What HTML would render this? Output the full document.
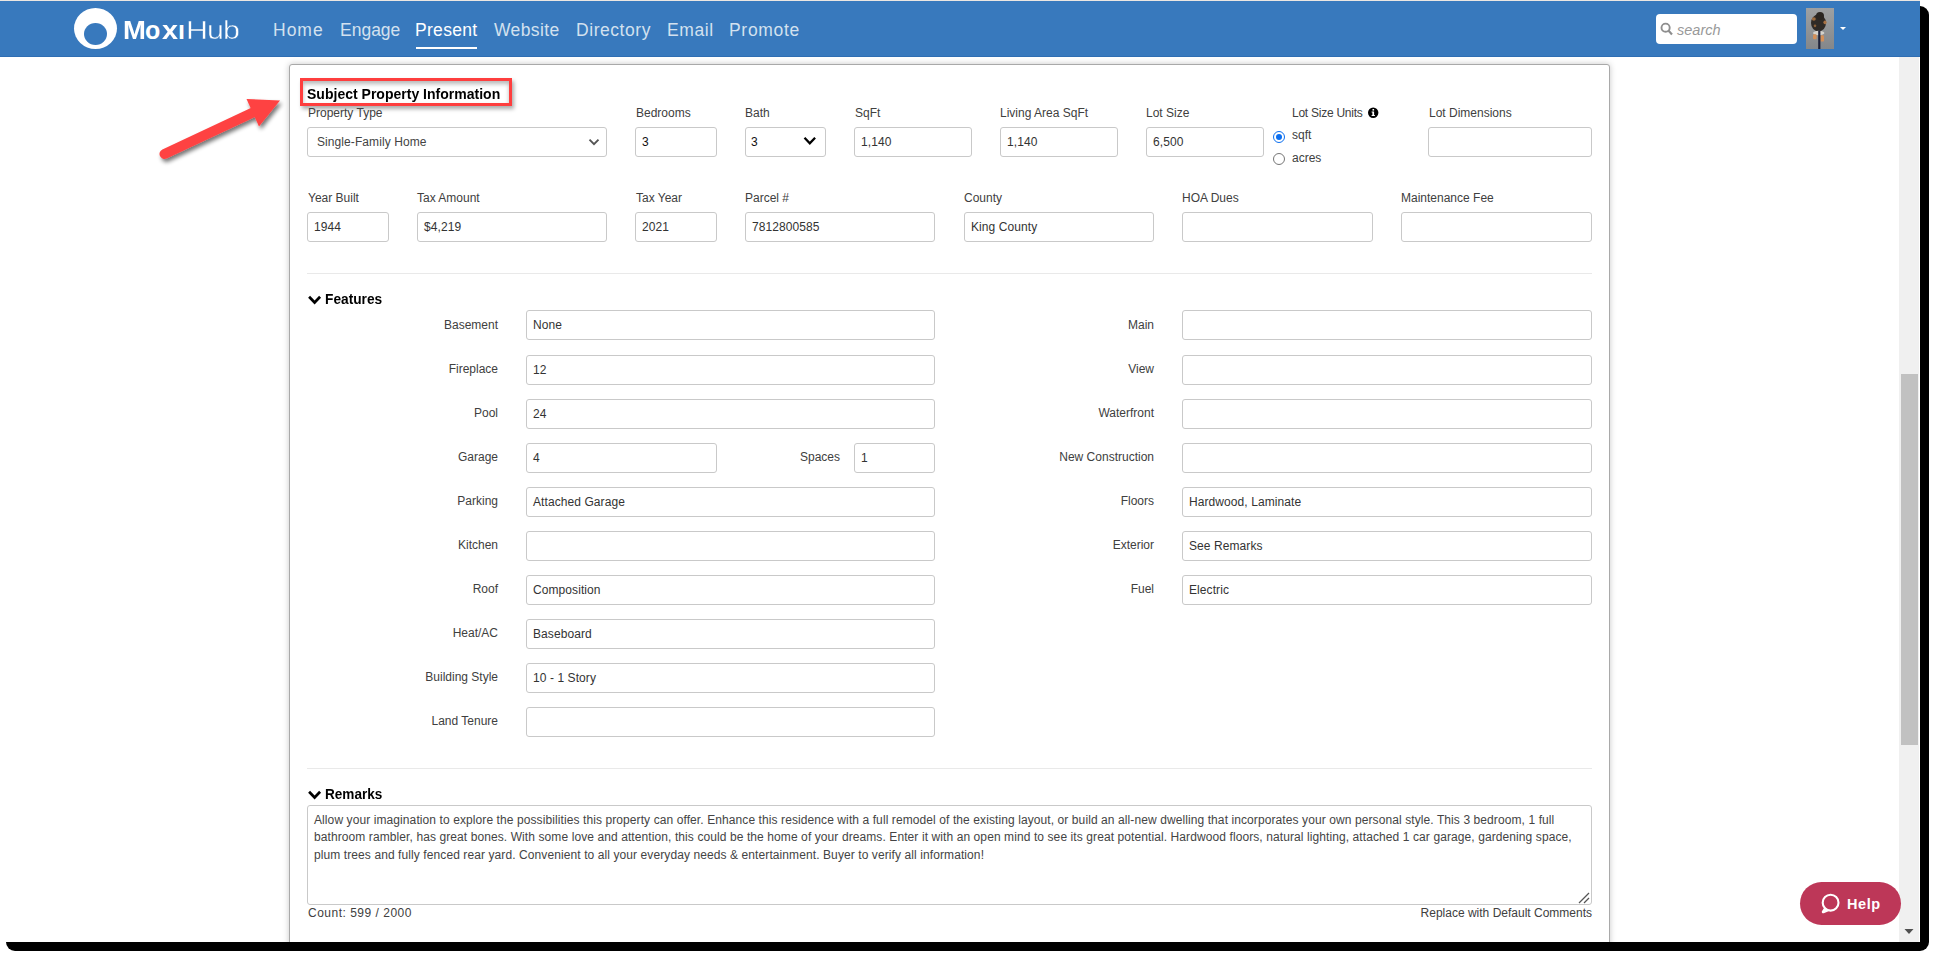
<!DOCTYPE html>
<html><head><meta charset="utf-8">
<style>
html,body{margin:0;padding:0;}
body{width:1935px;height:957px;overflow:hidden;position:relative;background:#fff;font-family:"Liberation Sans",sans-serif;}
.abs{position:absolute;}
#shadow{position:absolute;left:6px;top:6px;width:1923px;height:945px;background:#000;border-radius:9px;}
#win{position:absolute;left:0;top:0;width:1920px;height:942px;background:#fff;overflow:hidden;}
#topline{position:absolute;left:0;top:0;width:1920px;height:1px;background:#ebe6e2;}
#nav{position:absolute;left:0;top:1px;width:1920px;height:56px;background:#3879bd;border-bottom:0;}
#nav .bb{position:absolute;left:0;bottom:0;width:1920px;height:1px;background:#2f6eb3;}
.nl{position:absolute;top:19px;font-size:17.5px;line-height:22px;color:#d3e1ef;white-space:nowrap;}
.nl.act{color:#fff;}
#logo-o{position:absolute;left:74px;top:8px;width:43px;height:41px;border-radius:50%;background:#fff;}
#logo-i{position:absolute;left:84px;top:23px;width:23px;height:22px;border-radius:50%;background:#3879bd;}
.lg{position:absolute;top:14px;font-size:25px;line-height:32px;color:#fff;white-space:nowrap;}.lg.b{font-weight:bold;}.lg.t{-webkit-text-stroke:0.45px #3879bd;transform:scaleX(1.22);transform-origin:0 0;}
#search{position:absolute;left:1656px;top:14px;width:141px;height:30px;box-sizing:border-box;background:#fff;border-radius:4px;}
#avatar{position:absolute;left:1806px;top:8px;width:28px;height:41px;}
#scroll{position:absolute;left:1899px;top:57px;width:20px;height:885px;background:#f0f0f0;}
#thumb{position:absolute;left:1901px;top:374px;width:17px;height:371px;background:#c1c1c1;}
#card{position:absolute;left:289px;top:64px;width:1319px;height:1000px;border:1px solid #a9a9a9;border-radius:3px;background:#fff;box-shadow:0 0 6px rgba(0,0,0,0.22);}
.lbl{position:absolute;font-size:12px;line-height:14px;color:#404040;white-space:nowrap;}
.rl{text-align:right;}
.inp{position:absolute;box-sizing:border-box;height:30px;border:1px solid #c9c9c9;border-radius:3px;background:#fff;font-size:12px;line-height:28px;color:#333;padding-left:6px;white-space:nowrap;letter-spacing:0.08px;}
.hr{position:absolute;left:307px;width:1285px;height:1px;background:#e9e9e9;}
.sec{position:absolute;font-size:15px;font-weight:bold;line-height:17px;color:#000;white-space:nowrap;transform:scaleX(0.915);transform-origin:0 0;}
</style></head><body>
<div id="shadow"></div>
<div id="win">
  <div id="topline"></div>
  <div id="nav"><div class="bb"></div></div>
  <div id="logo-o"></div><div id="logo-i"></div>
  <div class="lg b" style="left:123px;transform:scaleX(1.1);transform-origin:0 0">M</div><div class="lg b" style="left:145px">o</div><div class="lg b" style="left:162px;transform:scaleX(1.15);transform-origin:0 0">x</div><div class="lg b" style="left:178px">&#305;</div><div class="lg t" style="left:185.5px">H</div><div class="lg t" style="left:207px">u</div><div class="lg t" style="left:223px">b</div>
  <div class="nl" style="left:273px;letter-spacing:1px">Home</div>
  <div class="nl" style="left:340px">Engage</div>
  <div class="nl act" style="left:415px;letter-spacing:0.3px">Present</div>
  <div class="abs" style="left:416px;top:47px;width:61px;height:2px;background:#fff"></div>
  <div class="nl" style="left:494px;letter-spacing:0.4px">Website</div>
  <div class="nl" style="left:576px;letter-spacing:0.55px">Directory</div>
  <div class="nl" style="left:667px;letter-spacing:0.6px">Email</div>
  <div class="nl" style="left:729px;letter-spacing:0.7px">Promote</div>
  <div id="search"></div>
  <svg id="avatar" width="28" height="41" viewBox="0 0 28 41"><defs><linearGradient id="avg" x1="0" y1="0" x2="0" y2="1"><stop offset="0" stop-color="#9ea0a2"/><stop offset="1" stop-color="#84878a"/></linearGradient></defs><rect width="28" height="41" fill="url(#avg)"/>
<ellipse cx="12.5" cy="15" rx="7.5" ry="8.5" fill="#2f2a26"/><ellipse cx="14" cy="8" rx="4" ry="4" fill="#2a2521"/><ellipse cx="7.8" cy="11" rx="2" ry="1.8" fill="#9a6a3e"/><ellipse cx="19" cy="14.3" rx="1.6" ry="1.9" fill="#a87244"/><ellipse cx="9" cy="17.8" rx="1.3" ry="1.4" fill="#8a5f38"/><ellipse cx="12.7" cy="25" rx="5.7" ry="2.2" fill="#d5d2cc"/><rect x="7" y="26.3" width="3.6" height="5" rx="1.2" fill="#d59058"/><rect x="14.5" y="27.3" width="3.5" height="6.3" rx="1.2" fill="#d59058"/><rect x="12.2" y="22.5" width="2.2" height="18.5" fill="#1f2238"/></svg>
  <div id="scroll"></div>
  <div id="thumb"></div>
  <div id="card"></div>
  <div class="abs" style="left:300px;top:78px;width:206px;height:22px;border:3px solid #fe3e3e;box-shadow:2px 3px 4px rgba(0,0,0,0.33), inset 0px 3px 4px rgba(0,0,0,0.28);"></div>
  <div class="abs" style="left:307px;top:85px;font-size:15px;font-weight:bold;line-height:17px;color:#000;white-space:nowrap;transform:scaleX(0.935);transform-origin:0 0">Subject Property Information</div>
  <div class="lbl" style="left:308px;top:106px;">Property Type</div>
<div class="inp" style="left:307px;top:127px;width:300px;padding-left:9px;color:#444">Single-Family Home</div>
<div class="lbl" style="left:636px;top:106px;">Bedrooms</div>
<div class="inp" style="left:635px;top:127px;width:82px;color:#111">3</div>
<div class="lbl" style="left:745px;top:106px;">Bath</div>
<div class="inp" style="left:745px;top:127px;width:81px;color:#111;padding-left:5px">3</div>
<div class="lbl" style="left:855px;top:106px;">SqFt</div>
<div class="inp" style="left:854px;top:127px;width:118px;">1,140</div>
<div class="lbl" style="left:1000px;top:106px;">Living Area SqFt</div>
<div class="inp" style="left:1000px;top:127px;width:118px;">1,140</div>
<div class="lbl" style="left:1146px;top:106px;">Lot Size</div>
<div class="inp" style="left:1146px;top:127px;width:118px;">6,500</div>
<div class="lbl" style="left:1292px;top:106px;letter-spacing:-0.25px">Lot Size Units</div>
<div class="lbl" style="left:1292px;top:128px;">sqft</div>
<div class="lbl" style="left:1292px;top:151px;">acres</div>
<div class="lbl" style="left:1429px;top:106px;">Lot Dimensions</div>
<div class="inp" style="left:1428px;top:127px;width:164px;"></div>
<div class="lbl" style="left:308px;top:191px;">Year Built</div>
<div class="inp" style="left:307px;top:212px;width:82px;">1944</div>
<div class="lbl" style="left:417px;top:191px;">Tax Amount</div>
<div class="inp" style="left:417px;top:212px;width:190px;">$4,219</div>
<div class="lbl" style="left:636px;top:191px;">Tax Year</div>
<div class="inp" style="left:635px;top:212px;width:82px;">2021</div>
<div class="lbl" style="left:745px;top:191px;">Parcel #</div>
<div class="inp" style="left:745px;top:212px;width:190px;">7812800585</div>
<div class="lbl" style="left:964px;top:191px;">County</div>
<div class="inp" style="left:964px;top:212px;width:190px;">King County</div>
<div class="lbl" style="left:1182px;top:191px;">HOA Dues</div>
<div class="inp" style="left:1182px;top:212px;width:191px;"></div>
<div class="lbl" style="left:1401px;top:191px;">Maintenance Fee</div>
<div class="inp" style="left:1401px;top:212px;width:191px;"></div>
<div class="lbl" style="right:1422px;top:318px">Basement</div>
<div class="inp" style="left:526px;top:310px;width:409px;">None</div>
<div class="lbl" style="right:1422px;top:362px">Fireplace</div>
<div class="inp" style="left:526px;top:355px;width:409px;">12</div>
<div class="lbl" style="right:1422px;top:406px">Pool</div>
<div class="inp" style="left:526px;top:399px;width:409px;">24</div>
<div class="lbl" style="right:1422px;top:450px">Garage</div>
<div class="inp" style="left:526px;top:443px;width:191px;">4</div>
<div class="lbl" style="right:1080px;top:450px">Spaces</div>
<div class="inp" style="left:854px;top:443px;width:81px;">1</div>
<div class="lbl" style="right:1422px;top:494px">Parking</div>
<div class="inp" style="left:526px;top:487px;width:409px;">Attached Garage</div>
<div class="lbl" style="right:1422px;top:538px">Kitchen</div>
<div class="inp" style="left:526px;top:531px;width:409px;"></div>
<div class="lbl" style="right:1422px;top:582px">Roof</div>
<div class="inp" style="left:526px;top:575px;width:409px;">Composition</div>
<div class="lbl" style="right:1422px;top:626px">Heat/AC</div>
<div class="inp" style="left:526px;top:619px;width:409px;">Baseboard</div>
<div class="lbl" style="right:1422px;top:670px">Building Style</div>
<div class="inp" style="left:526px;top:663px;width:409px;">10 - 1 Story</div>
<div class="lbl" style="right:1422px;top:714px">Land Tenure</div>
<div class="inp" style="left:526px;top:707px;width:409px;"></div>
<div class="lbl" style="right:766px;top:318px">Main</div>
<div class="inp" style="left:1182px;top:310px;width:410px;"></div>
<div class="lbl" style="right:766px;top:362px">View</div>
<div class="inp" style="left:1182px;top:355px;width:410px;"></div>
<div class="lbl" style="right:766px;top:406px">Waterfront</div>
<div class="inp" style="left:1182px;top:399px;width:410px;"></div>
<div class="lbl" style="right:766px;top:450px">New Construction</div>
<div class="inp" style="left:1182px;top:443px;width:410px;"></div>
<div class="lbl" style="right:766px;top:494px">Floors</div>
<div class="inp" style="left:1182px;top:487px;width:410px;">Hardwood, Laminate</div>
<div class="lbl" style="right:766px;top:538px">Exterior</div>
<div class="inp" style="left:1182px;top:531px;width:410px;">See Remarks</div>
<div class="lbl" style="right:766px;top:582px">Fuel</div>
<div class="inp" style="left:1182px;top:575px;width:410px;">Electric</div>
  <!-- arrow -->
  <svg class="abs" style="left:140px;top:85px" width="160" height="90" viewBox="140 85 160 90">
    <defs><filter id="ash" x="-20%" y="-40%" width="150%" height="180%"><feGaussianBlur in="SourceAlpha" stdDeviation="2"/><feOffset dx="2" dy="3"/><feComponentTransfer><feFuncA type="linear" slope="0.55"/></feComponentTransfer><feMerge><feMergeNode/><feMergeNode in="SourceGraphic"/></feMerge></filter></defs>
    <g filter="url(#ash)">
      <line x1="164.5" y1="154" x2="254" y2="112" stroke="#fe4343" stroke-width="10" stroke-linecap="round"/>
      <polygon points="246.5,99 280,100.5 259,126.5" fill="#fe4343"/>
    </g>
  </svg>
  <!-- section chevrons -->
  <svg class="abs" style="left:307px;top:294px" width="16" height="12" viewBox="0 0 16 12"><polyline points="2.1,2.8 7.6,8.5 13.1,2.8" fill="none" stroke="#000" stroke-width="2.7"/></svg>
  <svg class="abs" style="left:307px;top:789px" width="16" height="12" viewBox="0 0 16 12"><polyline points="2.1,2.8 7.6,8.5 13.1,2.8" fill="none" stroke="#000" stroke-width="2.7"/></svg>
  <!-- select chevrons -->
  <svg class="abs" style="left:587px;top:137px" width="14" height="10" viewBox="0 0 14 10"><polyline points="2.5,2.6 7,7.2 11.5,2.6" fill="none" stroke="#555" stroke-width="1.9"/></svg>
  <svg class="abs" style="left:802px;top:135px" width="16" height="12" viewBox="0 0 16 12"><polyline points="2.5,2.8 7.8,8.3 13.1,2.8" fill="none" stroke="#000" stroke-width="2.3"/></svg>
  <!-- info icon -->
  <svg class="abs" style="left:1367px;top:106px" width="13" height="13" viewBox="0 0 13 13"><circle cx="6.2" cy="6.7" r="5.2" fill="#000"/><rect x="5.5" y="3.0" width="1.6" height="1.6" fill="#fff"/><path d="M4.6 5.4H7.1V9.1H7.9V10.1H4.6V9.1H5.4V6.4H4.6Z" fill="#fff"/></svg>
  <!-- radios -->
  <div class="abs" style="left:1272.5px;top:130.5px;width:10px;height:10px;border:1px solid #0b6ff0;border-radius:50%;background:#fff"></div>
  <div class="abs" style="left:1275.5px;top:133.5px;width:6px;height:6px;border-radius:50%;background:#0b6ff0"></div>
  <div class="abs" style="left:1272.5px;top:152.5px;width:10px;height:10px;border:1px solid #767676;border-radius:50%;background:#fff"></div>
  <!-- resize handle -->
  <svg class="abs" style="left:1577px;top:891px" width="14" height="14" viewBox="0 0 14 14"><line x1="2" y1="12" x2="12" y2="2" stroke="#555" stroke-width="1.2"/><line x1="7" y1="12" x2="12" y2="7" stroke="#555" stroke-width="1.2"/></svg>
  <!-- scrollbar arrow -->
  <svg class="abs" style="left:1903px;top:927px" width="12" height="9" viewBox="0 0 12 9"><polygon points="1.5,2 10.5,2 6,7" fill="#505050"/></svg>
  <!-- help button -->
  <div class="abs" style="left:1800px;top:882px;width:101px;height:43px;border-radius:22px;background:#bd3758"></div>
  <svg class="abs" style="left:1818px;top:890px" width="24" height="24" viewBox="1818 890 24 24"><circle cx="1830.6" cy="902.7" r="7.9" fill="none" stroke="#fff" stroke-width="2.1"/><path d="M1825.2 907.6 L1822.6 911.6 Q1822.4 912.6 1823.5 912.4 L1828.3 910.6" fill="#fff" stroke="#fff" stroke-width="1.6" stroke-linejoin="round"/></svg>
  <div class="abs" style="left:1847px;top:896px;font-size:14.5px;font-weight:bold;line-height:17px;color:#fff;letter-spacing:0.6px">Help</div>
  <!-- search -->
  <svg class="abs" style="left:1660px;top:22px" width="14" height="15" viewBox="0 0 14 15"><circle cx="5.6" cy="5.7" r="4.1" fill="none" stroke="#8e8e8e" stroke-width="1.9"/><line x1="8.4" y1="8.6" x2="12" y2="12.4" stroke="#8e8e8e" stroke-width="2.2"/></svg>
  <div class="abs" style="left:1677px;top:21.5px;font-size:14.5px;font-style:italic;line-height:17px;color:#999">search</div>
  <div class="abs" style="left:1840px;top:27px;width:0;height:0;border-left:3px solid transparent;border-right:3px solid transparent;border-top:3px solid #fff"></div>

  <div class="hr" style="top:273px"></div>
  <div class="sec" style="left:325px;top:289.5px">Features</div>
  <div class="hr" style="top:768px"></div>
  <div class="sec" style="left:325px;top:785px;transform:scaleX(0.905)">Remarks</div>
  <div class="abs" style="left:307px;top:805px;width:1285px;height:100px;box-sizing:border-box;border:1px solid #c9c9c9;border-radius:3px;padding:6px 6px;font-size:12px;line-height:17.4px;color:#444;letter-spacing:0.093px;white-space:nowrap">Allow your imagination to explore the possibilities this property can offer. Enhance this residence with a full remodel of the existing layout, or build an all-new dwelling that incorporates your own personal style. This 3 bedroom, 1 full<br>bathroom rambler, has great bones. With some love and attention, this could be the home of your dreams. Enter it with an open mind to see its great potential. Hardwood floors, natural lighting, attached 1 car garage, gardening space,<br>plum trees and fully fenced rear yard. Convenient to all your everyday needs &amp; entertainment. Buyer to verify all information!</div>
  <div class="lbl" style="left:308px;top:906px;letter-spacing:0.5px">Count: 599 / 2000</div>
  <div class="lbl" style="right:328px;top:906px">Replace with Default Comments</div>

</div>
</body></html>
